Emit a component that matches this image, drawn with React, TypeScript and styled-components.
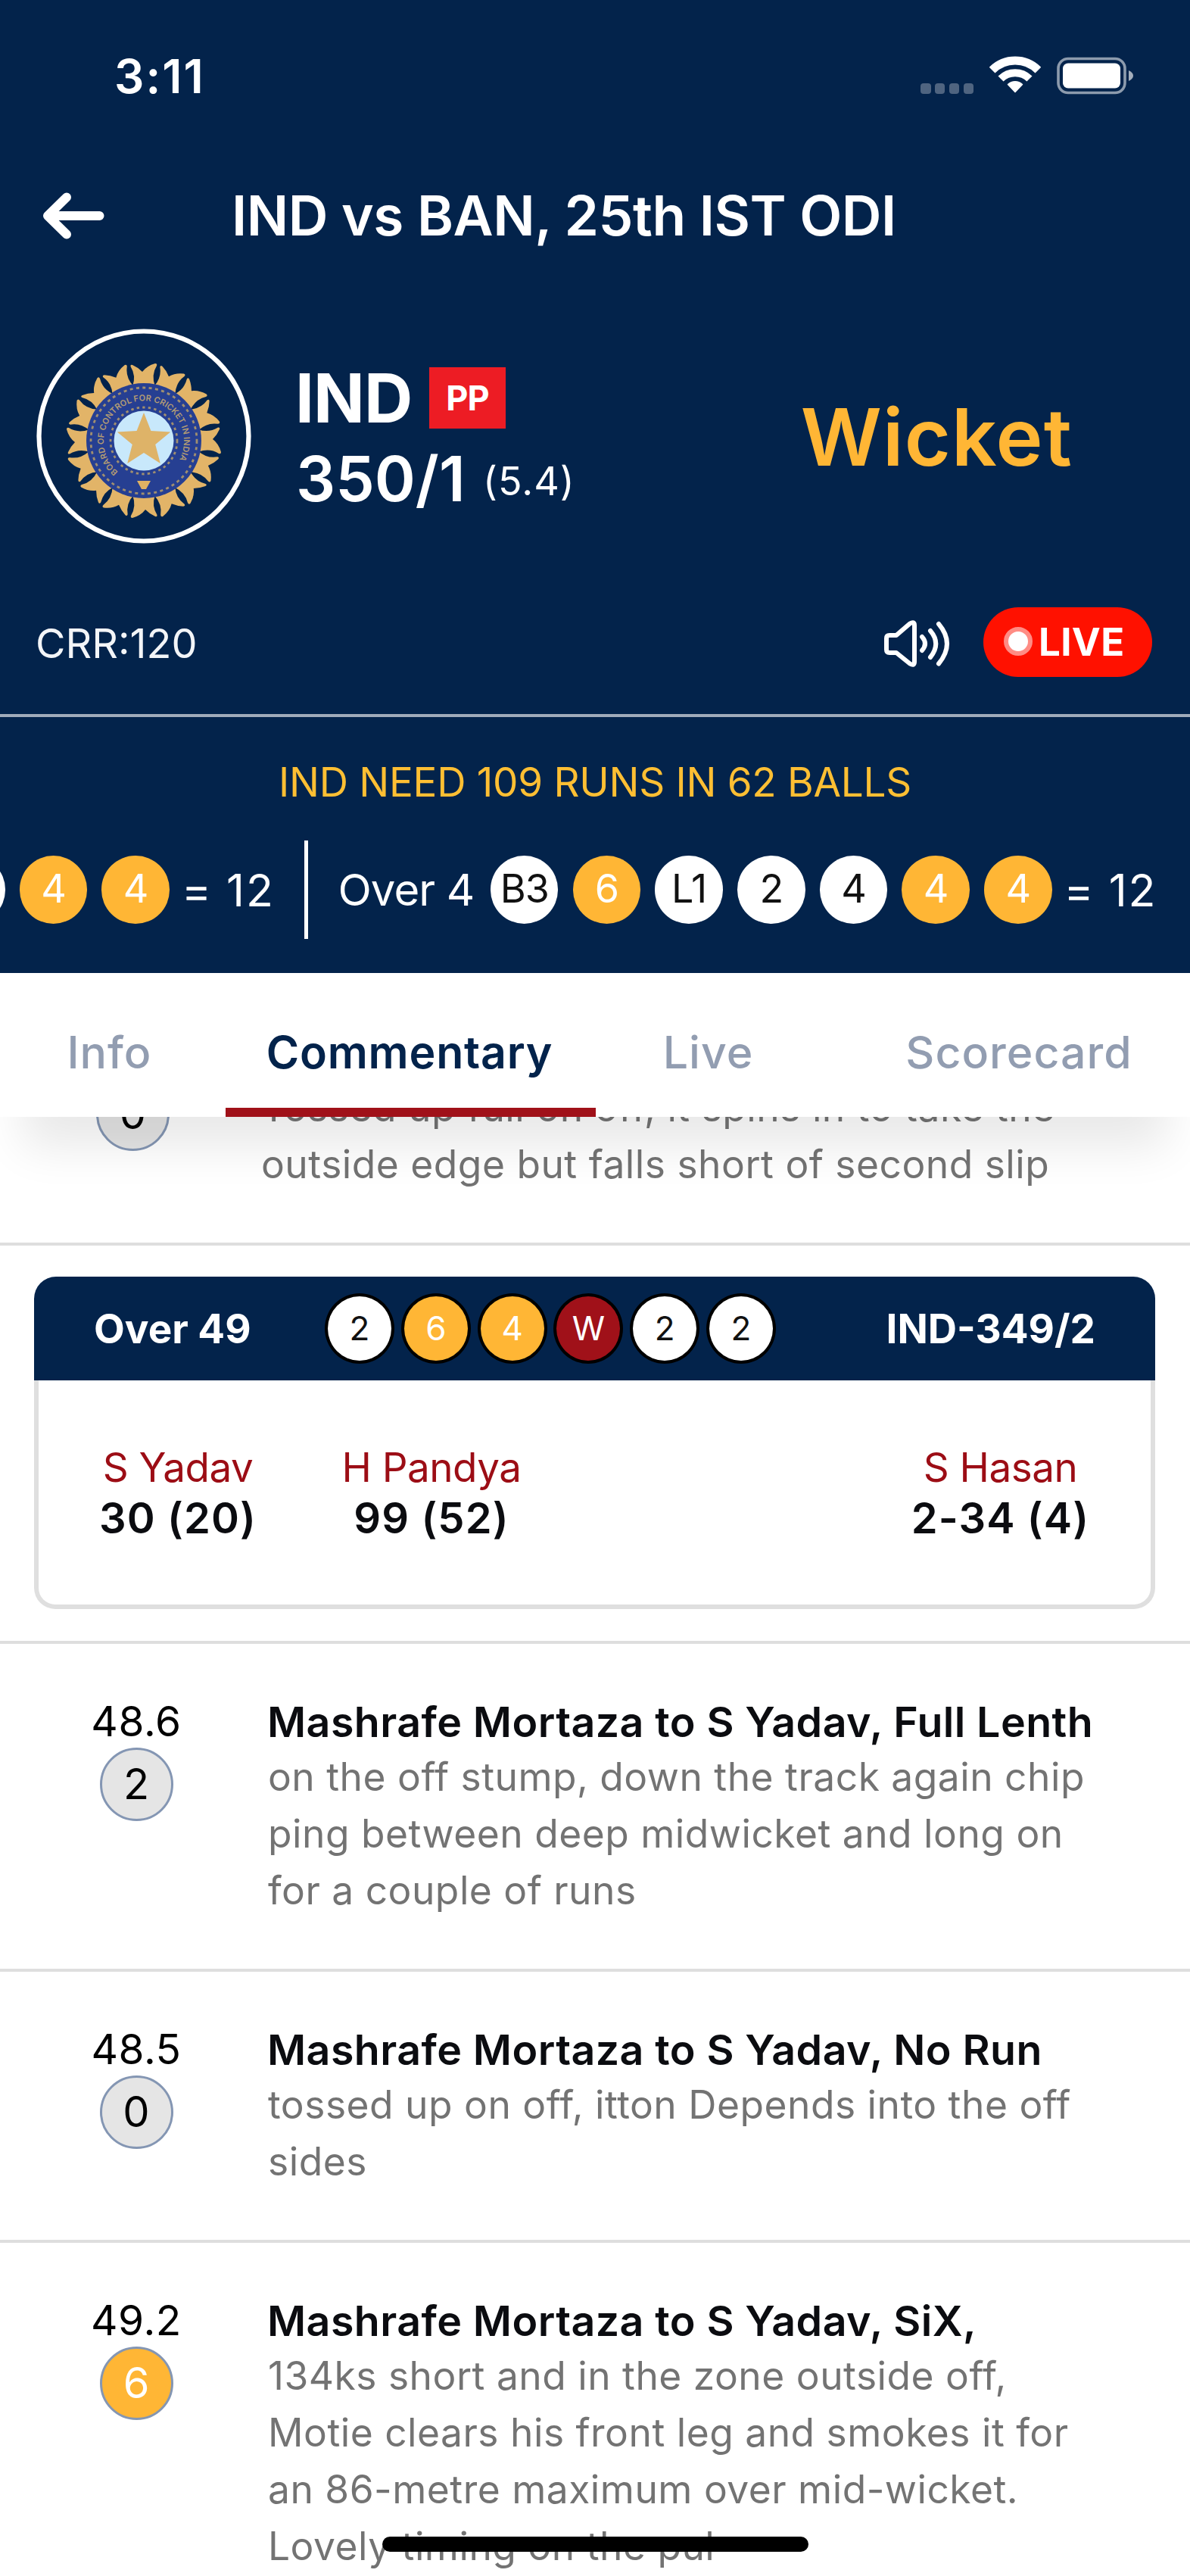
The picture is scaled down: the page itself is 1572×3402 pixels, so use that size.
import React from "react";
import styled, { createGlobalStyle } from "styled-components";

const color = {
  navy: "#03234b",
  amber: "#ffb635",
  red: "#a01119",
  muted: "#929db1",
  body: "#737373",
  line: "#dedede",
  ink: "#0b0c10",
};

const GlobalStyle = createGlobalStyle`
  * { box-sizing: border-box; }
  body { margin: 0; background: #fff; font-family: Inter, "Liberation Sans", sans-serif; }
`;

const Screen = styled.main`
  position: relative;
  width: 1572px;
  height: 3402px;
  overflow: hidden;
  background: #fff;
`;

const Header = styled.header`
  height: 1285px;
  background: ${color.navy};
  color: #fff;
`;

const StatusBar = styled.div`
  display: flex;
  align-items: center;
  height: 200px;
  padding: 0 74px 0 151px;
`;

const Clock = styled.span`
  font-size: 62px;
  font-weight: 600;
  letter-spacing: 2px;
  margin-right: auto;
`;

const SignalDots = styled.div`
  display: flex;
  gap: 5.5px;
  margin: 33px 21px 0 0;
`;

const SignalDot = styled.i`
  width: 13.3px;
  height: 14px;
  border-radius: 4px;
  background: #4f6480;
`;

const WifiGlyph = styled.svg`
  width: 68px;
  height: 50px;
  margin: -4px 21px 0 0;
`;

const BatteryGlyph = styled.svg`
  width: 102px;
  height: 50px;
`;

const TitleBar = styled.div`
  display: flex;
  align-items: center;
  height: 170px;
  padding-left: 54px;
`;

const BackArrow = styled.svg`
  width: 86px;
  height: 64px;
  margin-right: 166px;
`;

const MatchTitle = styled.h1`
  margin: 0;
  font-size: 73px;
  font-weight: 600;
  line-height: 100px;
  letter-spacing: -0.45px;
  white-space: nowrap;
`;

const TeamRow = styled.section`
  display: flex;
  align-items: center;
  height: 412px;
  padding: 0 155px 0 48px;
`;

const Crest = styled.svg`
  width: 284px;
  height: 284px;
  margin-right: 57px;
  overflow: visible;
`;

const Score = styled.div`
  display: flex;
  flex-direction: column;
  margin-top: 6px;
`;

const ScoreLine = styled.div`
  display: flex;
  align-items: center;
  height: 107px;
  white-space: nowrap;
`;

const TeamName = styled.span`
  width: 178px;
  padding-left: 1px;
  font-size: 89px;
  font-weight: 700;
  letter-spacing: -0.9px;
`;

const PowerPlay = styled.span`
  width: 101px;
  height: 81px;
  background: #ed1c24;
  font-size: 45px;
  font-weight: 700;
  line-height: 81px;
  letter-spacing: -1px;
  text-align: center;
`;

const Runs = styled.span`
  width: 249px;
  padding-left: 2px;
  font-size: 82px;
  font-weight: 600;
`;

const Overs = styled.span`
  padding-top: 6px;
  font-size: 52px;
  letter-spacing: 1px;
`;

const EventLabel = styled.strong`
  margin-left: auto;
  color: ${color.amber};
  font-size: 105px;
  font-weight: 600;
  letter-spacing: 1.15px;
`;

const MetaRow = styled.section`
  display: flex;
  align-items: center;
  height: 165px;
  padding: 0 50px 29px 47px;
  border-bottom: 4px solid #a0abba;
`;

const RunRate = styled.span`
  margin: 3px auto 0 0;
  color: #f3f5f8;
  font-size: 54px;
`;

const SpeakerGlyph = styled.svg`
  width: 92px;
  height: 70px;
  margin: 4px 42px 0 0;
`;

const LivePill = styled.div`
  display: flex;
  align-items: center;
  width: 223px;
  height: 92px;
  padding: 0 0 2px 27px;
  border-radius: 46px;
  background: #ff1100;
  font-size: 51px;
  font-weight: 700;
  letter-spacing: 0.3px;
`;

const LiveDot = styled.i`
  width: 38px;
  height: 38px;
  margin-right: 8px;
  border: 6.5px solid #ff8c84;
  border-radius: 50%;
  background: #fff;
`;

const Chase = styled.p`
  margin: 0;
  height: 163px;
  padding-top: 9px;
  color: #ffbf33;
  font-size: 53px;
  line-height: 154px;
  letter-spacing: -0.27px;
  text-align: center;
`;

const OverStrip = styled.div`
  display: flex;
  align-items: center;
  height: 130px;
  margin-left: -83px;
  white-space: nowrap;
`;

const StripBalls = styled.div`
  display: flex;
  gap: 19.2px;
`;

const StripBall = styled.span<{ $boundary?: boolean }>`
  width: 89.5px;
  height: 89.5px;
  border-radius: 50%;
  background: ${(p) => (p.$boundary ? color.amber : "#fff")};
  color: ${(p) => (p.$boundary ? "#fff" : "#111")};
  font-size: 52px;
  line-height: 87.5px;
  letter-spacing: -1px;
  text-align: center;
`;

const StripTotal = styled.span`
  width: 178.5px;
  padding-left: 16px;
  font-size: 59px;
  letter-spacing: 1.8px;
`;

const StripDivider = styled.i`
  width: 5px;
  height: 130px;
  background: #fff;
`;

const StripLabel = styled.span`
  width: 240.6px;
  padding-left: 39px;
  font-size: 58px;
  letter-spacing: -0.9px;
`;

const Tabs = styled.nav`
  position: relative;
  z-index: 1;
  display: grid;
  grid-template-columns: 298px 489px 297px 488px;
  height: 190px;
  background: #fff;
  box-shadow: 0 70px 60px -30px rgba(0, 0, 0, 0.09);
`;

const Tab = styled.a<{ $active?: boolean; $left?: number; $right?: number }>`
  padding: 32px ${(p) => p.$right ?? 0}px 0 ${(p) => p.$left ?? 0}px;
  border-bottom: 12px solid ${(p) => (p.$active ? color.red : "transparent")};
  color: ${(p) => (p.$active ? color.navy : color.muted)};
  font-size: 59px;
  font-weight: ${(p) => (p.$active ? 600 : 500)};
  line-height: 146px;
  letter-spacing: ${(p) => (p.$active ? 0.8 : 1)}px;
  text-align: center;
`;

const ClippedEntry = styled.article`
  display: flex;
  align-items: flex-end;
  height: 170px;
  overflow: hidden;
  border-bottom: 4px solid ${color.line};
`;

const Entry = styled.article`
  display: flex;
  align-items: flex-start;
  padding: 67px 0 66px;
  border-bottom: 4px solid ${color.line};
`;

const Delivery = styled.div<{ $width?: number; $lift?: number }>`
  display: flex;
  flex-direction: column;
  align-items: center;
  width: ${(p) => p.$width ?? 360}px;
  margin-bottom: ${(p) => p.$lift ?? 0}px;
`;

const DeliveryNumber = styled.span`
  font-size: 55px;
  line-height: 70px;
  letter-spacing: 0.6px;
  color: #000;
`;

const DeliveryBall = styled.span<{ $boundary?: boolean }>`
  width: 97px;
  height: 97px;
  border: 3.5px solid #8496b3;
  border-radius: 50%;
  background: ${(p) => (p.$boundary ? color.amber : "#e5e5e5")};
  color: ${(p) => (p.$boundary ? "#fff" : "#000")};
  font-size: 56px;
  line-height: 90px;
  text-align: center;
`;

const Remark = styled.div<{ $bottom?: number }>`
  margin-left: -7px;
  padding-bottom: ${(p) => p.$bottom ?? 0}px;
  white-space: nowrap;
`;

const RemarkTitle = styled.h2`
  margin: 0;
  color: ${color.ink};
  font-size: 55.5px;
  font-weight: 600;
  line-height: 71px;
  letter-spacing: 0.43px;
`;

const RemarkLine = styled.p`
  margin: 0;
  padding-left: 1px;
  color: ${color.body};
  font-size: 51.5px;
  line-height: 75px;
  letter-spacing: 0.49px;
`;

const OverCard = styled.section`
  width: 1481px;
  margin: 41px 0 42px 45px;
`;

const OverHead = styled.div`
  display: grid;
  grid-template-columns: 384px 596px 1fr;
  align-items: center;
  height: 137px;
  border-radius: 29px 29px 0 0;
  background: ${color.navy};
  color: #fff;
`;

const OverText = styled.strong<{ $end?: boolean }>`
  padding: ${(p) => (p.$end ? "0 79px 0 0" : "0 0 0 79px")};
  font-size: 53px;
  font-weight: 700;
  text-align: ${(p) => (p.$end ? "right" : "left")};
`;

const OverBalls = styled.div`
  display: flex;
  justify-content: space-between;
`;

const ballFill = { run: "#fff", boundary: color.amber, wicket: color.red };
type BallKind = keyof typeof ballFill;

const OverBall = styled.span<{ $kind: BallKind }>`
  width: 92px;
  height: 93px;
  border: 4.5px solid #000;
  border-radius: 50%;
  background: ${(p) => ballFill[p.$kind]};
  color: ${(p) => (p.$kind === "run" ? "#111" : "#fff")};
  font-size: 44px;
  line-height: 84px;
  text-align: center;
`;

const OverBody = styled.div`
  display: grid;
  grid-template-columns: 368px 302px 1fr 397px;
  height: 302px;
  padding-top: 82px;
  border: 6px solid #dfdfdf;
  border-top: 0;
  border-radius: 0 0 28px 28px;
`;

const Player = styled.div<{ $column: number }>`
  grid-column: ${(p) => p.$column};
  text-align: center;
`;

const PlayerName = styled.div`
  color: #9c0d15;
  font-size: 53px;
  line-height: 67px;
  letter-spacing: -0.5px;
`;

const PlayerFigures = styled.div`
  color: ${color.ink};
  font-size: 56px;
  font-weight: 600;
  line-height: 67px;
  letter-spacing: 1.1px;
`;

const Separator = styled.hr`
  height: 4px;
  margin: 0;
  border: 0;
  background: ${color.line};
`;

const HomeIndicator = styled.div`
  position: absolute;
  left: 505px;
  top: 3350px;
  width: 563px;
  height: 20px;
  border-radius: 10px;
  background: #000;
`;

const petals = Array.from({ length: 16 }, (_, i) => i * 22.5);

const star = Array.from({ length: 10 }, (_, i) => {
  const r = i % 2 ? 16 : 37;
  const a = (Math.PI / 5) * i - Math.PI / 2;
  return `${(r * Math.cos(a)).toFixed(2)},${(r * Math.sin(a)).toFixed(2)}`;
}).join(" ");

function TeamCrest() {
  return (
    <Crest viewBox="-142 -142 284 284" fill="none">
      <circle r="138.5" stroke="#fff" strokeWidth="6.2" />
      <g transform="translate(0 6)">
        {petals.map((angle) => (
          <path
            key={angle}
            transform={`rotate(${angle})`}
            d="M-14.8 -72 Q-10 -86 -17.5 -98 Q-18 -101 -15 -100 Q-8 -97 -2 -91 Q4 -99 15 -102 Q18 -102 17 -99 Q9.5 -87 14.8 -72 Z"
            fill="#e2b468"
          />
        ))}
        <circle r="76" fill="#263f92" />
        <circle r="70" stroke="#a08f70" strokeWidth="2.8" strokeDasharray="4 4.4" />
        <circle r="44" stroke="#a08f70" strokeWidth="2.8" strokeDasharray="3.4 4.2" />
        <path id="crest-ring" d="M-34 41 A53 53 0 1 1 34 41" />
        <text fill="#b39c74" fontSize="11" fontWeight="600">
          <textPath href="#crest-ring" textLength="238">
            BOARD OF CONTROL FOR CRICKET IN INDIA
          </textPath>
        </text>
        <path d="M-9 53 H9 L3 64 H-3 Z" fill="#e0b263" />
        <circle r="39.5" fill="#c8e8fb" />
        <polygon points={star} fill="#deb368" />
      </g>
    </Crest>
  );
}

const overBalls: { label: string; kind: BallKind }[] = [
  { label: "2", kind: "run" },
  { label: "6", kind: "boundary" },
  { label: "4", kind: "boundary" },
  { label: "W", kind: "wicket" },
  { label: "2", kind: "run" },
  { label: "2", kind: "run" },
];

const currentOver = [
  { label: "B3" },
  { label: "6", boundary: true },
  { label: "L1" },
  { label: "2" },
  { label: "4" },
  { label: "4", boundary: true },
  { label: "4", boundary: true },
];

const entries = [
  {
    number: "48.6",
    runs: "2",
    title: "Mashrafe Mortaza to S Yadav, Full Lenth",
    lines: [
      "on the off stump, down the track again chip",
      "ping between deep midwicket and long on",
      "for a couple of runs",
    ],
  },
  {
    number: "48.5",
    runs: "0",
    title: "Mashrafe Mortaza to S Yadav, No Run",
    lines: ["tossed up on off, itton Depends into the off", "sides"],
  },
  {
    number: "49.2",
    runs: "6",
    boundary: true,
    title: "Mashrafe Mortaza to S Yadav, SiX,",
    lines: [
      "134ks short and in the zone outside off,",
      "Motie clears his front leg and smokes it for",
      "an 86-metre maximum over mid-wicket.",
      "Lovely timing on the pul",
    ],
  },
];

export default function App() {
  return (
    <Screen>
      <GlobalStyle />
      <Header>
        <StatusBar>
          <Clock>3:11</Clock>
          <SignalDots>
            <SignalDot />
            <SignalDot />
            <SignalDot />
            <SignalDot />
          </SignalDots>
          <WifiGlyph viewBox="0 0 68 50" fill="none" stroke="#fff">
            <path d="M3.6 19.6 A43 43 0 0 1 64.4 19.6" strokeWidth="11" />
            <path d="M15 31 A27 27 0 0 1 53 31" strokeWidth="10" />
            <path d="M24.5 38.5 A14 14 0 0 1 43.5 38.5 L34 48.5 Z" fill="#fff" strokeWidth="1.5" strokeLinejoin="round" />
          </WifiGlyph>
          <BatteryGlyph viewBox="0 0 102 50" fill="none">
            <rect x="2" y="2.5" width="88" height="45" rx="13" stroke="#8d9bad" strokeWidth="3.6" />
            <rect x="8" y="8.5" width="76" height="33" rx="7" fill="#fff" />
            <path d="M95 18 Q101 21 101 25 Q101 29 95 32 Z" fill="#a4aebc" />
          </BatteryGlyph>
        </StatusBar>

        <TitleBar>
          <BackArrow viewBox="0 0 86 64" fill="none" stroke="#fff" strokeWidth="12" strokeLinecap="round" strokeLinejoin="round">
            <path d="M77.5 32 H9 M34 7.5 L9 32 L34 56.5" />
          </BackArrow>
          <MatchTitle>IND vs BAN, 25th IST ODI</MatchTitle>
        </TitleBar>

        <TeamRow>
          <TeamCrest />
          <Score>
            <ScoreLine>
              <TeamName>IND</TeamName>
              <PowerPlay>PP</PowerPlay>
            </ScoreLine>
            <ScoreLine>
              <Runs>350/1</Runs>
              <Overs>(5.4)</Overs>
            </ScoreLine>
          </Score>
          <EventLabel>Wicket</EventLabel>
        </TeamRow>

        <MetaRow>
          <RunRate>CRR:120</RunRate>
          <SpeakerGlyph viewBox="0 0 92 70" fill="none" stroke="#fff" strokeWidth="6" strokeLinecap="round" strokeLinejoin="round">
            <path d="M10 24 H19 L37 8.5 Q43 5 43 11 V59 Q43 65 37 61.5 L19 47 H10 Q6 47 6 43 V28 Q6 24 10 24 Z" />
            <path d="M53 26 Q61 35 53 44 M64 18 Q78.5 35 64 53 M75 9 Q97 35 75 61.5" />
          </SpeakerGlyph>
          <LivePill>
            <LiveDot />
            LIVE
          </LivePill>
        </MetaRow>

        <Chase>IND NEED 109 RUNS IN 62 BALLS</Chase>

        <OverStrip>
          <StripBalls>
            <StripBall />
            <StripBall $boundary>4</StripBall>
            <StripBall $boundary>4</StripBall>
          </StripBalls>
          <StripTotal>= 12</StripTotal>
          <StripDivider />
          <StripLabel>Over 4</StripLabel>
          <StripBalls>
            {currentOver.map((ball, i) => (
              <StripBall key={i} $boundary={ball.boundary}>
                {ball.label}
              </StripBall>
            ))}
          </StripBalls>
          <StripTotal>= 12</StripTotal>
        </OverStrip>
      </Header>

      <Tabs>
        <Tab $right={9}>Info</Tab>
        <Tab $active $right={3}>Commentary</Tab>
        <Tab>Live</Tab>
        <Tab $left={36}>Scorecard</Tab>
      </Tabs>

      <ClippedEntry>
        <Delivery $width={351} $lift={121}>
          <DeliveryBall>0</DeliveryBall>
        </Delivery>
        <Remark $bottom={66}>
          <RemarkLine>Tossed up full on off, it spins in to take the</RemarkLine>
          <RemarkLine>outside edge but falls short of second slip</RemarkLine>
        </Remark>
      </ClippedEntry>

      <OverCard>
        <OverHead>
          <OverText>Over 49</OverText>
          <OverBalls>
            {overBalls.map((ball, i) => (
              <OverBall key={i} $kind={ball.kind}>
                {ball.label}
              </OverBall>
            ))}
          </OverBalls>
          <OverText $end>IND-349/2</OverText>
        </OverHead>
        <OverBody>
          <Player $column={1}>
            <PlayerName>S Yadav</PlayerName>
            <PlayerFigures>30 (20)</PlayerFigures>
          </Player>
          <Player $column={2}>
            <PlayerName>H Pandya</PlayerName>
            <PlayerFigures>99 (52)</PlayerFigures>
          </Player>
          <Player $column={4}>
            <PlayerName>S Hasan</PlayerName>
            <PlayerFigures>2-34 (4)</PlayerFigures>
          </Player>
        </OverBody>
      </OverCard>
      <Separator />

      {entries.map((entry) => (
        <Entry key={entry.number}>
          <Delivery>
            <DeliveryNumber>{entry.number}</DeliveryNumber>
            <DeliveryBall $boundary={entry.boundary}>{entry.runs}</DeliveryBall>
          </Delivery>
          <Remark>
            <RemarkTitle>{entry.title}</RemarkTitle>
            {entry.lines.map((line) => (
              <RemarkLine key={line}>{line}</RemarkLine>
            ))}
          </Remark>
        </Entry>
      ))}

      <HomeIndicator />
    </Screen>
  );
}
